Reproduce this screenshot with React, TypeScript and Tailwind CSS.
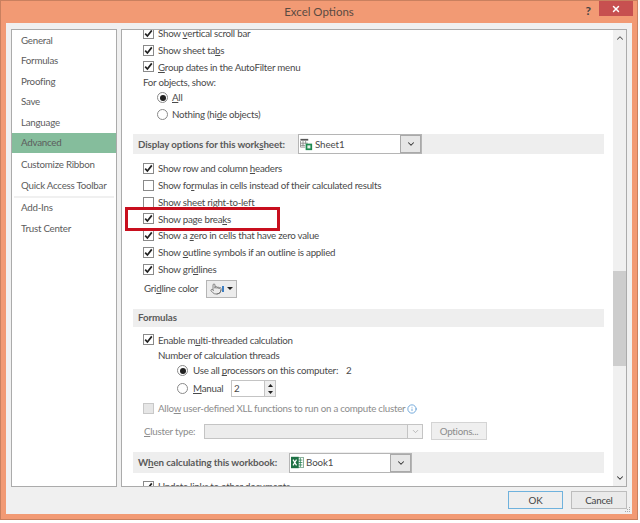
import { ReactNode } from 'react'
import { ChevronDown, ChevronUp, Info, Pointer, X } from 'lucide-react'

function CheckBox({ checked, disabled }: { checked?: boolean; disabled?: boolean }) {
  return (
    <span
      className={`flex h-[11px] w-[11px] shrink-0 items-center justify-center border ${
        disabled ? 'border-[#c8c8c8] bg-[#e6e6e6]' : 'border-[#8a8a8a] bg-white'
      }`}
    >
      {checked && (
        <svg width="9" height="9" viewBox="0 0 9 9">
          <path d="M1.2 4.6 L3.4 7 L7.8 1.4" fill="none" stroke="#222" strokeWidth="1.7" />
        </svg>
      )}
    </span>
  )
}

function CheckRow({ checked, disabled, children }: { checked?: boolean; disabled?: boolean; children: ReactNode }) {
  return (
    <div className={`flex h-[16.75px] items-center gap-[4px] pl-[21px] ${disabled ? 'text-[#8c8c8c]' : ''}`}>
      <CheckBox checked={checked} disabled={disabled} />
      <span className="whitespace-nowrap">{children}</span>
    </div>
  )
}

function Radio({ checked }: { checked?: boolean }) {
  return (
    <span className="flex h-[11px] w-[11px] shrink-0 items-center justify-center rounded-full border border-[#8a8a8a] bg-white">
      {checked && <span className="h-[6px] w-[6px] rounded-full bg-[#222]" />}
    </span>
  )
}

function Band({ children, className }: { children: ReactNode; className: string }) {
  return (
    <div className={`ml-[11px] mr-[9px] flex items-center bg-[#eeeeee] pl-[5px] font-bold tracking-[-0.1px] text-[#5a5a5a] ${className}`}>
      {children}
    </div>
  )
}

function DropButton({ width }: { width: string }) {
  return (
    <span className={`flex h-full ${width} items-center justify-center border border-[#a9a9a9] bg-[#e6e6e6]`}>
      <ChevronDown size={10} strokeWidth={2.5} className="text-[#333]" />
    </span>
  )
}

function SheetIcon() {
  return (
    <svg width="13" height="13" viewBox="0 0 15 14" className="shrink-0">
      <rect x="0.5" y="0.5" width="9" height="2" fill="#555" />
      <path d="M0.5 3 V10 H6 M3.5 3 V9 M6.5 3 V6 M0.5 5.5 H9 M0.5 8 H6" fill="none" stroke="#888" strokeWidth="1" />
      <rect x="6.5" y="6" width="7.5" height="7.5" fill="#1f8a50" />
      <rect x="8.5" y="8" width="3.5" height="3.5" fill="#e6f3ea" />
    </svg>
  )
}

function BookIcon() {
  return (
    <svg width="13" height="13" viewBox="0 0 16 15" className="shrink-0">
      <rect x="6" y="1.5" width="9.5" height="12" fill="#fff" stroke="#6f9f83" />
      <path d="M9 4.5 H14 M9 7.5 H14 M9 10.5 H14 M11.5 2 V13" stroke="#2f8457" />
      <rect x="0" y="0.5" width="9.5" height="14" fill="#1e7145" />
      <path d="M2.5 4 L6.8 11 M6.8 4 L2.5 11" stroke="#fff" strokeWidth="1.5" />
    </svg>
  )
}

export default function App() {
  const nav = ['General', 'Formulas', 'Proofing', 'Save', 'Language', 'Advanced']

  return (
    <div className="h-[523px] w-[640px] overflow-hidden bg-white font-['Lato',sans-serif] text-[9.75px] tracking-[-0.25px] text-[#4a4a4a]">
      <div className="flex h-[520px] w-[638px] flex-col border border-[#c9805f] bg-[#f29a74]">
        {/* title bar */}
        <div className="relative flex h-[22px] shrink-0 items-center justify-center text-[11.5px] tracking-normal text-[#5a4a42]">
          Excel Options
          <span className="absolute right-[46px] top-[1px] text-[12px] font-bold text-[#444]">?</span>
          <span className="absolute right-[4px] top-0 flex h-[15px] w-[34px] items-center justify-center bg-[#c75050]">
            <X size={10} strokeWidth={3.5} className="text-white" />
          </span>
        </div>

        {/* client area */}
        <div className="mx-[5px] flex h-[491px] flex-col bg-[#f0f0f0] px-[5px] pt-[6px]">
          <div className="flex h-[458px] shrink-0 gap-[4px]">
            {/* left list */}
            <div className="w-[106px] shrink-0 border border-[#ababab] bg-white text-[#5c5c5c]">
              {nav.map((item) => (
                <div
                  key={item}
                  className={`flex h-[20.5px] items-center pl-[9px] ${item === 'Advanced' ? 'bg-[#85bd9c]' : ''}`}
                >
                  {item}
                </div>
              ))}
              <div className="mt-[1.5px] flex h-[20.5px] items-center pl-[9px]">Customize Ribbon</div>
              <div className="flex h-[20.5px] items-center whitespace-nowrap pl-[9px]">Quick Access Toolbar</div>
              <div className="mx-[2px] h-[2px] bg-[#f0f0f0]" />
              <div className="flex h-[20.5px] items-center pl-[9px]">Add-Ins</div>
              <div className="flex h-[20.5px] items-center pl-[9px]">Trust Center</div>
            </div>

            {/* options pane */}
            <div className="relative flex h-[458px] w-[506px] shrink-0 overflow-hidden border border-[#ababab] bg-white">
              <div className="min-w-0 flex-1 -mt-[5px]">
                <CheckRow checked>Show <u>v</u>ertical scroll bar</CheckRow>
                <CheckRow checked>Show sheet ta<u>b</u>s</CheckRow>
                <CheckRow checked><u>G</u>roup dates in the AutoFilter menu</CheckRow>
                <div className="flex h-[14px] items-center pl-[21px]">For objects, show:</div>
                <div className="flex h-[17px] items-center gap-[4px] pl-[35px]">
                  <Radio checked />
                  <span><u>A</u>ll</span>
                </div>
                <div className="flex h-[17px] items-center gap-[4px] pl-[35px]">
                  <Radio />
                  <span>Nothing (hi<u>d</u>e objects)</span>
                </div>

                <Band className="mt-[11px] h-[20px]">
                  <span className="w-[160px] shrink-0 whitespace-nowrap">Display options for this work<u>s</u>heet:</span>
                  <span className="flex h-full w-[124px] items-center gap-[2px] border border-[#b5b5b5] bg-white pl-[1px] font-normal text-[#4a4a4a]">
                    <SheetIcon />
                    <span className="flex-1">Sheet1</span>
                    <DropButton width="w-[21px]" />
                  </span>
                </Band>

                <div className="mt-[6px]">
                  <CheckRow checked>Show row and column <u>h</u>eaders</CheckRow>
                  <CheckRow>Show fo<u>r</u>mulas in cells instead of their calculated results</CheckRow>
                  <CheckRow>Sho<u>w</u> sheet right-to-left</CheckRow>
                  <CheckRow checked>Show page brea<u>k</u>s</CheckRow>
                  <CheckRow checked>Show a <u>z</u>ero in cells that have zero value</CheckRow>
                  <CheckRow checked>Show <u>o</u>utline symbols if an outline is applied</CheckRow>
                  <CheckRow checked>Show gri<u>d</u>lines</CheckRow>
                </div>
                <div className="mt-[2px] flex h-[18px] items-center pl-[22px]">
                  <span className="w-[62px] whitespace-nowrap">Gri<u>d</u>line color</span>
                  <span className="flex h-full w-[31px] items-center gap-[3px] border border-[#b5b5b5] bg-[#ececec] pl-[3px]">
                    <span className="relative flex">
                      <Pointer size={12} strokeWidth={1.5} className="text-[#666]" />
                      <span className="absolute -right-[2px] top-[3px] h-[6px] w-[2px] bg-[#3c7fc4]" />
                    </span>
                    <svg width="6" height="3" viewBox="0 0 6 3" className="ml-[2px]">
                      <path d="M0 0 H6 L3 3 Z" fill="#222" />
                    </svg>
                  </span>
                </div>

                <Band className="mt-[11px] h-[18px]">Formulas</Band>

                <div className="mt-[5px]">
                  <CheckRow checked>Enable m<u>u</u>lti-threaded calculation</CheckRow>
                </div>
                <div className="flex h-[15px] items-center pl-[36px]">Number of calculation threads</div>
                <div className="flex h-[15px] items-center gap-[5px] pl-[55px]">
                  <Radio checked />
                  <span>Use all <u>p</u>rocessors on this computer:</span>
                  <span className="ml-[3px]">2</span>
                </div>
                <div className="mt-[2px] flex h-[17px] items-center gap-[5px] pl-[55px]">
                  <Radio />
                  <span className="w-[33px]"><u>M</u>anual</span>
                  <span className="flex h-full w-[45px] items-center justify-between border border-[#c4c4c4] bg-white pl-[2px]">
                    2
                    <span className="flex h-full w-[11px] flex-col border-l border-[#c4c4c4] bg-[#eeeeee]">
                      <span className="flex flex-1 items-center justify-center">
                        <svg width="5" height="3" viewBox="0 0 5 3"><path d="M0 3 L2.5 0 L5 3 Z" fill="#222" /></svg>
                      </span>
                      <span className="flex flex-1 items-center justify-center">
                        <svg width="5" height="3" viewBox="0 0 5 3"><path d="M0 0 H5 L2.5 3 Z" fill="#222" /></svg>
                      </span>
                    </span>
                  </span>
                </div>
                <div className="mt-[3px] flex items-center">
                  <CheckRow disabled>Allo<u>w</u> user-defined XLL functions to run on a compute cluster</CheckRow>
                  <Info size={10} className="ml-[2px] text-[#5b9bd5]" />
                </div>
                <div className="mt-[5px] flex h-[18px] items-center pl-[22px] text-[#8c8c8c]">
                  <span className="w-[60px] whitespace-nowrap"><u>C</u>luster type:</span>
                  <span className="flex h-[15px] w-[219px] justify-end border border-[#c4c4c4] bg-[#ececec]">
                    <span className="flex w-[15px] items-center justify-center border-l border-[#c4c4c4] bg-[#f2f2f2]">
                      <ChevronDown size={9} className="text-[#aaa]" />
                    </span>
                  </span>
                  <span className="ml-[8px] flex h-full w-[56px] items-center justify-center border border-[#d4d4d4] bg-[#efefef]">
                    Options...
                  </span>
                </div>

                <Band className="mt-[12px] h-[21px]">
                  <span className="w-[151px] shrink-0 whitespace-nowrap">W<u>h</u>en calculating this workbook:</span>
                  <span className="flex h-[20px] w-[123px] items-center gap-[2px] border border-[#b5b5b5] bg-white pl-[1px] font-normal text-[#4a4a4a]">
                    <BookIcon />
                    <span className="flex-1">Book1</span>
                    <DropButton width="w-[21px]" />
                  </span>
                </Band>

                <div className="mt-[5px]">
                  <CheckRow checked>Update links to other documents</CheckRow>
                </div>
              </div>

              {/* scrollbar */}
              <div className="relative flex w-[13px] shrink-0 flex-col items-center bg-[#f0f0f0]">
                <ChevronUp size={10} strokeWidth={2.5} className="mt-[3px] text-[#555]" />
                <div className="mt-[228px] h-[95px] w-full bg-[#cdcdcd]" />
                <ChevronDown size={10} strokeWidth={2.5} className="mt-auto mb-[3px] text-[#333]" />
              </div>

              {/* highlight drawn over the screenshot */}
              <div className="absolute left-[3px] top-[177px] h-[24px] w-[155px] border-[3px] border-[#c80f1e]" />
            </div>
          </div>

          {/* footer */}
          <div className="relative flex flex-1 items-start justify-end gap-[8px] pt-[4px] text-[#444]">
            <span className="flex h-[18px] w-[55px] items-center justify-center border border-[#6fb2dd] bg-[#eeeeee]">OK</span>
            <span className="flex h-[18px] w-[56px] items-center justify-center border border-[#bdbdbd] bg-[#eaeaea]">Cancel</span>
            <svg width="7" height="7" viewBox="0 0 7 7" className="absolute bottom-px -right-[4px]">
              <path d="M5 1 h1 v1 h-1 z M3 3 h1 v1 h-1 z M5 3 h1 v1 h-1 z M1 5 h1 v1 h-1 z M3 5 h1 v1 h-1 z M5 5 h1 v1 h-1 z" fill="#a8a8a8" />
            </svg>
          </div>
        </div>
      </div>
    </div>
  )
}
